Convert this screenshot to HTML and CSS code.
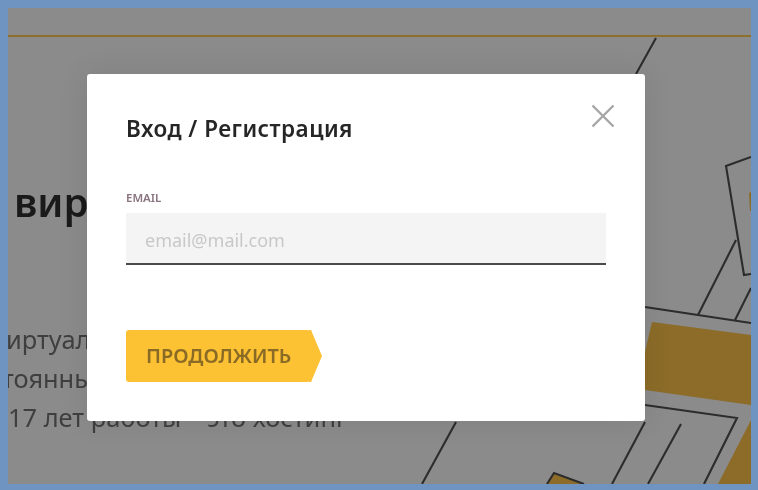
FILE: index.html
```html
<!DOCTYPE html>
<html lang="ru">
<head>
<meta charset="utf-8">
<title>Вход / Регистрация</title>
<link rel="stylesheet" href="styles.css">
</head>
<body>
<main class="window">
  <div class="stage">
    <svg class="map" width="743" height="476" viewBox="8 8 743 476" aria-hidden="true">
      <path class="gold" d="M652 322L751 335V405L645 390V352Z"/>
      <path class="gold" d="M751 420L718 484H751Z"/>
      <path class="gold" d="M547 484L554 473L584 484Z"/>
      <path class="gold" d="M749 193L751 192V211L750 211Z"/>
      <path class="line" d="M656 38L636 74"/>
      <path class="line" d="M751 157L726 166L744 275L751 274"/>
      <path class="line" d="M736 240L698 315"/>
      <path class="line" d="M751 288L735 320"/>
      <path class="line" d="M645 307L751 323"/>
      <path class="line" d="M645 405L737 418L704 484"/>
      <path class="line" d="M645 422L612 484"/>
      <path class="line" d="M681 424L648 484"/>
      <path class="line" d="M456 422L422 484"/>
      <path class="line" d="M547 484L554 473L584 484"/>
    </svg>
    <div class="rule"></div>
    <div class="hero">
      <h1 class="hero-title">вир</h1>
      <p class="hero-text hero-text-a">иртуал</p>
      <p class="hero-text hero-text-b">тоянны</p>
      <p class="hero-text">17 лет работы – это хостинг</p>
    </div>
  </div>
  <section class="modal">
    <header class="modal-head">
      <h2 class="modal-title">Вход / Регистрация</h2>
      <button class="close" type="button" aria-label="Закрыть">
        <svg width="24" height="24" viewBox="0 0 24 24"><path d="M1.5 1.5L22.5 22.5M22.5 1.5L1.5 22.5"/></svg>
      </button>
    </header>
    <label class="field">
      <span class="field-label">EMAIL</span>
      <span class="input">email@mail.com</span>
    </label>
    <button class="submit" type="button">ПРОДОЛЖИТЬ</button>
  </section>
</main>
</body>
</html>
```

FILE: styles.css
```css
* {
  box-sizing: border-box;
}

html,
body {
  margin: 0;
  height: 100%;
}

body {
  background: #6f94c2;
  padding: 8px 7px 6px 8px;
  font-family: "Noto Sans", "Open Sans", sans-serif;
  overflow: hidden;
}

.window {
  position: relative;
  height: 476px;
  background: #8b8b8b;
  filter: blur(0.35px);
}

.stage {
  position: relative;
  height: 100%;
  overflow: hidden;
}

.map {
  position: absolute;
  inset: 0;
}

.gold {
  fill: #8c6c28;
}

.line {
  fill: none;
  stroke: #2c2c2c;
  stroke-width: 2.1;
}

.rule {
  height: 2px;
  margin-top: 27px;
  background: #8f6f2c;
  position: relative;
}

.hero {
  position: relative;
  padding-top: 135px;
}

.hero-title {
  margin: 0 0 88px 6px;
  font-size: 40px;
  line-height: 60px;
  font-weight: 600;
  color: #1a1a1a;
}

.hero-text {
  margin: 0;
  font-size: 25.4px;
  line-height: 39px;
  color: #3f3f3f;
  white-space: nowrap;
}

.hero-text-a {
  margin-left: -2px;
}

.hero-text-b {
  margin-left: -6px;
}

.modal {
  position: absolute;
  left: 79px;
  top: 66px;
  width: 558px;
  height: 347px;
  padding: 39px 39px 0;
  background: #fff;
  border-radius: 3px;
  box-shadow: 0 0 30px rgba(0, 0, 0, 0.09);
}

.modal-head {
  display: flex;
  justify-content: space-between;
  align-items: flex-start;
}

.modal-title {
  margin: 0;
  font-size: 22.5px;
  line-height: 32px;
  font-weight: 600;
  letter-spacing: 0.47px;
  color: #262626;
}

.close {
  display: block;
  margin: -9px -9px 0 0;
  padding: 0;
  border: 0;
  background: none;
  line-height: 0;
}

.close path {
  fill: none;
  stroke: #a6a6a6;
  stroke-width: 2.4;
}

.field {
  display: block;
  margin-top: 45px;
  width: 480px;
}

.field-label {
  display: block;
  font-size: 11.5px;
  line-height: 16px;
  font-weight: 600;
  color: #8a7480;
}

.input {
  display: block;
  margin-top: 7px;
  height: 52px;
  padding-left: 19px;
  background: #f4f4f4;
  border-bottom: 2px solid #4a4a4a;
  font-size: 18px;
  line-height: 54px;
  color: #c8c8c8;
}

.submit {
  position: relative;
  display: block;
  margin-top: 65px;
  width: 184px;
  height: 52px;
  padding: 0 0 0 20px;
  border: 0;
  border-radius: 3px;
  background: #fdc134;
  font-family: inherit;
  font-size: 19.9px;
  font-weight: 600;
  line-height: 52px;
  text-align: left;
  color: #8a6b25;
}

.submit::after {
  content: "";
  position: absolute;
  left: 183px;
  top: 0;
  width: 13px;
  height: 52px;
  background: #fdc134;
  clip-path: polygon(0 0, 2px 0, 100% 50%, 2px 100%, 0 100%);
}
```
